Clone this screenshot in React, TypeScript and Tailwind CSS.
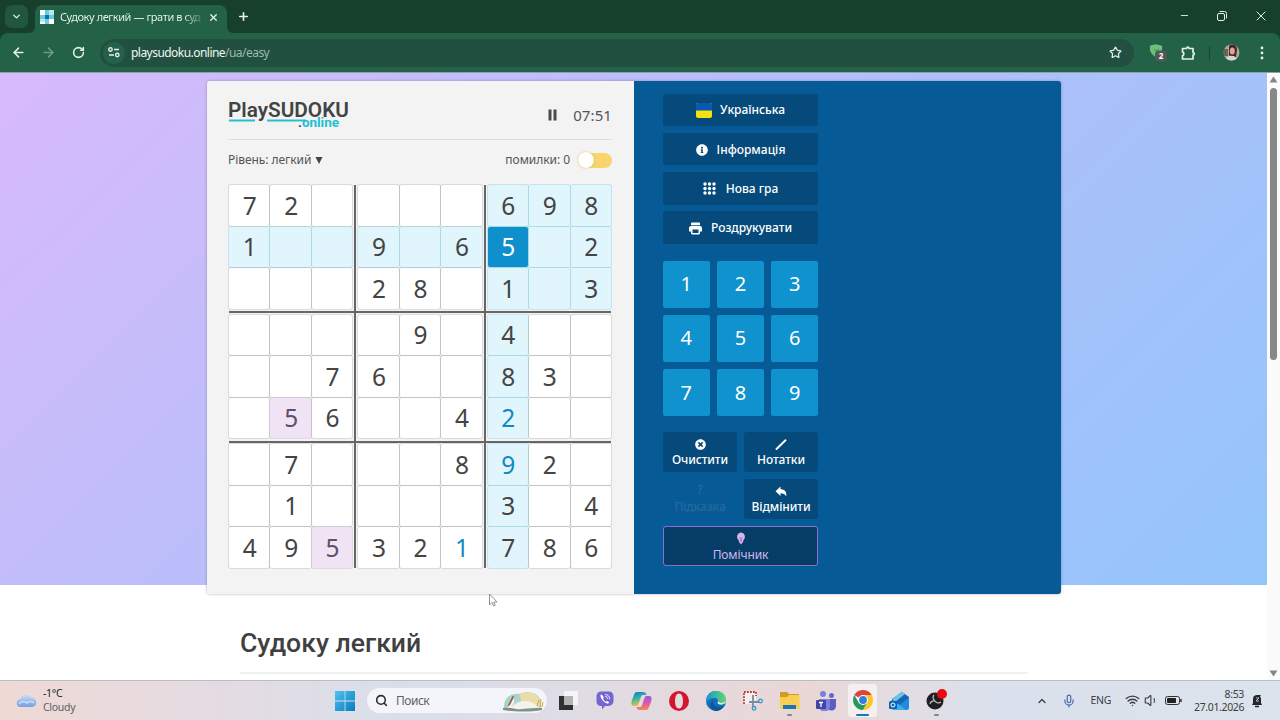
import React from 'react';
import { ArrowLeft, ArrowRight, RotateCw, Star, Plus, X, Minus, ChevronDown, ChevronUp, Wifi, Volume1, Mic, Search } from 'lucide-react';
import { FaInfoCircle, FaTimesCircle } from 'react-icons/fa';

const board = [
  '72....698',
  '1..9.65.2',
  '...28.1.3',
  '....9.4..',
  '..76..83.',
  '.56..42..',
  '.7...892.',
  '.1....3.4',
  '495321786',
];

const entered = ['5-6', '6-6', '8-5'];
const sameDigit = ['5-1', '8-2'];

const cellClass = (row: number, col: number) => {
  const key = `${row}-${col}`;
  if (key === '1-6') return 'bg-[#0f8fcb] text-white shadow-[0_0_0_1px_rgba(120,205,230,0.5)]';
  if (sameDigit.includes(key)) return 'bg-[#efe3f4] text-[#5f5068] shadow-[0_0_0_1px_rgba(190,165,205,0.35)]';
  const related = row === 1 || col === 6 || (row < 3 && col > 5);
  const color = entered.includes(key) ? 'text-[#1488c4]' : 'text-[#444]';
  return related
    ? `bg-[#e0f6fc] ${color} shadow-[0_0_0_1px_rgba(125,205,225,0.38)]`
    : `bg-white ${color} shadow-[0_0_0_1px_rgba(0,0,0,0.1)]`;
};

const Box: React.FC<{ box: number }> = ({ box }) => (
  <div className="grid grid-cols-3 grid-rows-3 gap-px">
    {Array.from({ length: 9 }, (_, i) => {
      const row = Math.floor(box / 3) * 3 + Math.floor(i / 3);
      const col = (box % 3) * 3 + (i % 3);
      const value = board[row][col];
      return (
        <div
          key={i}
          className={`flex items-center justify-center rounded-[2px] pt-px pl-px text-[24.5px] leading-none ${cellClass(row, col)}`}
        >
          {value === '.' ? '' : value}
        </div>
      );
    })}
  </div>
);

const Board: React.FC = () => (
  <div className="relative mt-[12px] ml-px grid h-[383px] w-[382px] grid-cols-3 grid-rows-3 gap-[6px]">
    {Array.from({ length: 9 }, (_, i) => (
      <Box key={i} box={i} />
    ))}
    <div className="absolute inset-y-0 left-[125px] w-[2px] bg-[#666]" />
    <div className="absolute inset-y-0 left-[255px] w-[2px] bg-[#666]" />
    <div className="absolute inset-x-0 top-[126px] h-[2px] bg-[#666]" />
    <div className="absolute inset-x-0 top-[256px] h-[2px] bg-[#666]" />
  </div>
);

const BrowserHeader: React.FC = () => (
  <header className="h-[72px] bg-[#163f2c] font-['Noto_Sans',sans-serif] text-[#e4f1ea]">
    <div className="flex h-[33px] items-end">
      <div className="mb-[5px] ml-[5px] flex h-[23px] w-[23px] items-center justify-center rounded-[7px] bg-[#215640]">
        <ChevronDown size={11} strokeWidth={3} />
      </div>
      <svg className="ml-px h-[6px] w-[6px]" viewBox="0 0 6 6"><path d="M6 0a6 6 0 0 1-6 6h6z" fill="#236247" /></svg>
      <div className="flex h-[28px] w-[192px] items-center rounded-t-[8px] bg-[#236247] pb-1 pl-[5px]">
        <svg width="14" height="14" viewBox="0 0 14 14">
          <path fill="#fff" d="M0 0h14v14H0z" />
          <path fill="#6bcbe5" d="M5 0h4v14H5zM0 5h14v4H0z" />
          <path fill="#b5e8f4" d="M9 0h5v5H9zM0 9h5v3H0z" />
          <path fill="#08779e" d="M5 5h4v4H5z" />
        </svg>
        <span className="ml-1.5 w-[141px] bg-gradient-to-r from-[#f0f8f4] from-88% to-[#f0f8f4]/20 bg-clip-text text-[11px] leading-4 tracking-[-0.42px] whitespace-nowrap text-transparent">
          Судоку легкий — грати в судо
        </span>
        <X className="ml-[7px]" size={11} strokeWidth={3} />
      </div>
      <svg className="h-[6px] w-[6px]" viewBox="0 0 6 6"><path d="M0 0a6 6 0 0 0 6 6H0z" fill="#236247" /></svg>
      <Plus className="mb-[10px] ml-[4px]" size={13} strokeWidth={3} />
      <div className="mb-[12px] ml-auto flex items-center">
        <Minus size={11} strokeWidth={2} />
        <svg className="ml-[27px]" width="10" height="10" viewBox="0 0 10 10" fill="none" stroke="currentColor">
          <rect x=".5" y="2.5" width="7" height="7" rx="1.5" />
          <path d="M2.5 .5h5a2 2 0 0 1 2 2v5" />
        </svg>
        <svg className="mr-[14px] ml-[29px]" width="10" height="10" viewBox="0 0 10 10" stroke="currentColor"><path d="M.7.7l8.6 8.6M9.3.7L.7 9.3" /></svg>
      </div>
    </div>
    <div className="flex h-[39px] items-center rounded-t-[8px] bg-[#236247]">
      <ArrowLeft className="ml-[11px]" size={15} strokeWidth={2.4} />
      <ArrowRight className="ml-[15px] text-[#6f9c88]" size={15} strokeWidth={2.4} />
      <RotateCw className="ml-[16px]" size={13} strokeWidth={2.8} />
      <div className="ml-[15px] flex h-[28px] w-[1034px] items-center rounded-full bg-[#225040] pl-[3px]">
        <div className="flex h-[22px] w-[22px] items-center justify-center rounded-full bg-[#24604a]">
          <svg width="12" height="11" viewBox="0 0 12 11" fill="none" stroke="currentColor" strokeWidth="1.4">
            <circle cx="2.5" cy="2.5" r="1.7" /><path d="M6 2.5h5M1 8h5" /><circle cx="9.3" cy="8" r="1.7" />
          </svg>
        </div>
        <span className="ml-[6px] pt-px text-[12px] leading-4 tracking-[-0.54px] text-[#eef7f2]">
          playsudoku.online<span className="text-[#9dbbac]">/ua/easy</span>
        </span>
        <Star className="mr-[12px] ml-auto" size={13} strokeWidth={2.2} />
      </div>
      <svg className="ml-[15px]" width="18" height="19" viewBox="0 0 18 19">
        <path d="M1 3C4 1 9 1 13 3c1 6-2 9-6 11C3 12 0 8 1 3z" fill="#6cc17a" />
        <path d="M5 6l2 2 3-2" stroke="#3e9458" fill="none" />
        <rect x="6" y="7.5" width="12" height="11" rx="4" fill="#515956" />
        <text x="12" y="16" textAnchor="middle" fill="#fff" fontSize="8" fontWeight="700">2</text>
      </svg>
      <svg className="ml-[14px]" width="15" height="16" viewBox="0 0 15 16" fill="none" stroke="currentColor" strokeWidth="1.7" strokeLinejoin="round">
        <path d="M1.500 3.500H5.500a1.300 1.300 0 0 1 2.600 0h3.900V7.500a1.300 1.300 0 0 1 0 2.600v3.900H1.500v-3.300a2 2 0 0 0 0-3.800z" />
      </svg>
      <div className="ml-[13px] h-[14px] w-px bg-[#174632]" />
      <svg className="ml-[13px]" width="17" height="17" viewBox="0 0 17 17">
        <clipPath id="face"><circle cx="8.5" cy="8.5" r="8" /></clipPath>
        <g clipPath="url(#face)">
          <path fill="#a9ab9b" d="M0 0h17v17H0z" />
          <path fill="#6b6153" d="M0 5h5v7H0z" />
          <path fill="#4d2525" d="M6 2c4-3 8-1 8 4l-1 7-7-1z" />
          <ellipse cx="9.300" cy="7" rx="2.500" ry="3.500" fill="#dba792" />
          <path fill="#d6d8d3" d="M3 17c0-5 4-6 6-5 3 0 5 2 5 5z" />
        </g>
      </svg>
      <svg className="ml-[20px]" width="4" height="14" viewBox="0 0 4 14" fill="currentColor">
        <circle cx="2" cy="2" r="1.400" /><circle cx="2" cy="7" r="1.400" /><circle cx="2" cy="12" r="1.400" />
      </svg>
    </div>
  </header>
);

const menuButton = 'flex h-[32.5px] items-center justify-center rounded-[2px] bg-[#064a7b] pt-px';
const toolButton = 'flex h-[40px] flex-col items-center justify-center gap-[3px] rounded-[3px] pt-[2px] text-[12px] leading-[14px] tracking-[-0.1px]';

const LeftPanel: React.FC = () => (
  <section className="h-full w-[427px] bg-[#f3f3f3] pr-[22px] pl-[21px] text-[#555]">
    <div className="flex h-[59px] items-start justify-between border-b border-[#dedede]">
      <svg className="mt-[17px]" width="124" height="32" viewBox="0 0 124 32">
        <path d="M1 22.500h26M39 22.500h39" stroke="#22bfd5" strokeWidth="2" />
        <text x="0" y="18.500" fill="#444" fontSize="21" fontWeight="600" fontFamily="Roboto, sans-serif" textLength="121" lengthAdjust="spacingAndGlyphs">PlaySUDOKU</text>
        <text x="70" y="29" fill="#22bfd5" fontSize="12.500" fontWeight="700" fontFamily="Roboto, sans-serif" textLength="41" lengthAdjust="spacingAndGlyphs"><tspan fill="#444">.</tspan>online</text>
      </svg>
      <div className="mt-[24px] flex items-center">
        <svg width="9" height="12" viewBox="0 0 9 12" fill="#4a4a4a"><path d="M.5 .5h3v11h-3zM5.500 .5h3v11h-3z" /></svg>
        <span className="ml-[16px] text-[15px] leading-5 tracking-[0.1px]">07:51</span>
      </div>
    </div>
    <div className="flex h-[33px] items-center pt-[7px] text-[12px]">
      <span className="tracking-[-0.05px]">Рівень: легкий</span>
      <svg className="ml-1" width="8" height="9" viewBox="0 0 8 9"><path d="M.5 1h7L4 8z" fill="#444" /></svg>
      <span className="ml-auto tracking-[-0.05px]">помилки: 0</span>
      <div className="ml-[8px] flex h-[15px] w-[34px] items-center rounded-full bg-[#f7d56b]">
        <div className="h-[16px] w-[16px] shrink-0 rounded-full bg-white shadow-[0_0_2px_rgba(200,160,40,0.7)]" />
      </div>
    </div>
    <Board />
  </section>
);

const RightPanel: React.FC = () => (
  <section className="h-full w-[427px] bg-[#065b96] pt-[12.5px] pl-[29px] text-white">
    <div className="w-[155px]">
      <div className="flex flex-col gap-[6.8px] text-[12px] font-medium">
        <button className={menuButton}>
          <svg width="16" height="16" viewBox="0 0 16 16">
            <rect y="1" width="16" height="15" rx="2" fill="#f8df12" />
            <path d="M0 3a2 2 0 0 1 2-2h12a2 2 0 0 1 2 2v5.500H0z" fill="#0758b5" />
          </svg>
          <span className="ml-[8px]">Українська</span>
        </button>
        <button className={menuButton}>
          <FaInfoCircle size={12} />
          <span className="ml-[9px]">Інформація</span>
        </button>
        <button className={menuButton}>
          <svg width="13" height="13" viewBox="0 0 13 13" fill="currentColor">
            {[2, 6.5, 11].map((y) => [2, 6.5, 11].map((x) => <circle key={`${x}-${y}`} cx={x} cy={y} r="1.700" />))}
          </svg>
          <span className="ml-[10px]">Нова гра</span>
        </button>
        <button className={menuButton}>
          <svg width="13" height="13" viewBox="0 0 13 13" fill="currentColor">
            <path d="M3 .5h7a1 1 0 0 1 1 1v1.700H2V1.500a1 1 0 0 1 1-1z" />
            <path fillRule="evenodd" d="M2 4h9a2 2 0 0 1 2 2v3.500h-2V11a1.500 1.500 0 0 1-1.500 1.500h-6A1.500 1.500 0 0 1 2 11V9.500H0V6a2 2 0 0 1 2-2zm1.500 3.500V11h6V7.500z" />
          </svg>
          <span className="ml-[9px]">Роздрукувати</span>
        </button>
      </div>
      <div className="mt-[17px] grid grid-cols-3 gap-[7.5px] text-[20px]">
        {[1, 2, 3, 4, 5, 6, 7, 8, 9].map((n) => (
          <button key={n} className="flex h-[46.700px] items-center justify-center rounded-[2px] bg-[#0f92cd] leading-none">
            {n}
          </button>
        ))}
      </div>
      <div className="mt-[16.500px] grid grid-cols-2 gap-x-[7px] gap-y-[6.700px] font-medium">
        <button className={`${toolButton} bg-[#064a7b]`}>
          <FaTimesCircle size={11} />
          Очистити
        </button>
        <button className={`${toolButton} bg-[#064a7b]`}>
          <svg width="12" height="11" viewBox="0 0 12 11"><path d="M1.500 10L10.500 1.200" stroke="#fff" strokeWidth="1.900" strokeLinecap="round" /></svg>
          Нотатки
        </button>
        <button className={`${toolButton} text-[#24699c]`}>
          <span className="-mt-[3px] text-[12px] leading-[14px]">?</span>
          Підказка
        </button>
        <button className={`${toolButton} bg-[#064a7b]`}>
          <svg width="12" height="11" viewBox="0 0 12 11"><path d="M5.500 .5v2.700c4 0 6.500 2.200 5.700 7.300C10 8 8.500 7.200 5.500 7.200V10L.5 5.200z" fill="#fff" /></svg>
          Відмінити
        </button>
        <button className={`${toolButton} col-span-2 gap-[2px] border-[1.500px] border-[#8e70cc] bg-[#063d66] font-normal text-[#d5b5ee]`}>
          <svg width="10" height="13" viewBox="0 0 10 13">
            <path d="M5 .5a4.200 4.200 0 0 1 2.600 7.300L7 10l-2 2.500L3 10l-.6-2.200A4.200 4.200 0 0 1 5 .5z" fill="currentColor" />
            <path d="M4 5.500l1 1 1-1M5 6.500V10" stroke="#604d84" strokeWidth=".8" fill="none" />
          </svg>
          Помічник
        </button>
      </div>
    </div>
  </section>
);

const appSlot = 'flex h-[34px] w-[36.8px] shrink-0 items-center justify-center';

const Taskbar: React.FC = () => (
  <footer className="flex h-[40px] items-center border-t border-[#b9bec6] bg-linear-[90deg,#efd9d5_0%,#e4dbe2_17%,#d9dfea_31%,#dfdce4_45%,#ead7d6_63%,#dbe1ec_77%,#dbe3ec_100%] font-['Noto_Sans',sans-serif] text-[#3d3d42]">
    <svg className="ml-[16px]" width="21" height="15" viewBox="0 0 21 15">
      <defs><linearGradient id="cloud" y2="1" x2="0"><stop stopColor="#c7dcf6" /><stop offset="1" stopColor="#789ee0" /></linearGradient></defs>
      <path d="M5 14a4 4 0 0 1-.5-8A6 6 0 0 1 15.500 4.800 4.600 4.600 0 0 1 16 14z" fill="url(#cloud)" />
      <path d="M3 11c2-3 6-3 8-1 2-2 5-2 7 0" stroke="#d8e6fa" strokeWidth="1.200" fill="none" />
    </svg>
    <div className="ml-[6px] w-[60px] text-[10.500px] leading-[13.500px] tracking-[-0.300px]">
      <div className="text-[#222]">-1°C</div>
      <div className="text-[#606066]">Cloudy</div>
    </div>
    <svg className="ml-[232px]" width="20" height="20" viewBox="0 0 20 20">
      <defs><linearGradient id="win" x2="1" y2="1"><stop stopColor="#4dc5ee" /><stop offset="1" stopColor="#087bc0" /></linearGradient></defs>
      <path d="M0 0h9.600v9.600H0zM10.400 0H20v9.600h-9.600zM0 10.400h9.600V20H0zM10.400 10.400H20V20h-9.600z" fill="url(#win)" />
    </svg>
    <div className="ml-[12px] flex h-[25px] w-[180px] items-center rounded-full bg-[#f3f5fa] pl-[8px]">
      <Search size={13} strokeWidth={2.8} className="text-[#2b2b2f]" />
      <span className="ml-[8px] text-[12px] tracking-[-0.500px] text-[#606066]">Поиск</span>
      <svg className="mr-[3px] ml-auto" width="42" height="22" viewBox="0 0 42 22">
        <path d="M2 17C2 8 8 3 18 4c6-4 18-1 20 5l1 10H2z" fill="#a9d4c9" />
        <path d="M18 4c7-4 18 0 20 6v8H20z" fill="#eedca8" />
        <path d="M4 19c3-6 5-9 6-12l2-1 0 4c1 3-1 4-3 7 5-4 8-6 14-6 6 0 12 3 13 7-8 3-24 3-32 1z" fill="#f2f2ee" />
        <path d="M5 17L10.500 6l1.800.5L8 15z" fill="#925f52" />
        <path d="M1 18c8-1 12 2 19 1s13-1 20-1v2c-10 2-30 2-39 0z" fill="#80918a" />
        <path d="M35 16l2-6M38 17l1-8M40 17l1-5" stroke="#c9a84b" />
      </svg>
    </div>
    <div className="ml-[3px] flex">
      <div className={appSlot}>
        <svg width="20" height="20" viewBox="0 0 20 20"><path d="M6 0h14v14H6z" fill="#f5f5f7" /><path d="M1 5h14v14H1z" fill="#303033" /><path d="M6 5h9v9H6z" fill="#b3b3b6" /></svg>
      </div>
      <div className={appSlot}>
        <svg width="18" height="19" viewBox="0 0 18 19">
          <path d="M5 .5h8a4.500 4.500 0 0 1 4.500 4.500v5a5 5 0 0 1-5 5H9l-3 3.500V15C2 15 .5 13 .5 10V5A4.500 4.500 0 0 1 5 .5z" fill="#7565d0" />
          <path d="M5.700 3.500c-1 0-1.700 1-1.200 2 1 3 3 5.500 6.500 7 1 .4 2-.5 2-1.300L11.300 10l-1.300.8C8.500 10 7.500 9 7 7.500L7.700 6z" fill="#fff" />
          <path d="M9.500 3.500c2.600.3 4 1.700 4.200 4.200M9.700 5.500c1.200.1 2 .9 2.100 2" fill="none" stroke="#fff" strokeWidth=".9" strokeLinecap="round" />
        </svg>
      </div>
      <div className={appSlot}>
        <svg width="21" height="20" viewBox="0 0 21 20">
          <defs>
            <linearGradient id="copA" y2="1" x2=".3"><stop stopColor="#146fca" /><stop offset=".5" stopColor="#31b7a5" /><stop offset="1" stopColor="#f3bd3b" /></linearGradient>
            <linearGradient id="copB" y2="1" x2="0"><stop stopColor="#925be0" /><stop offset=".5" stopColor="#dc5aaa" /><stop offset="1" stopColor="#f48b48" /></linearGradient>
          </defs>
          <path d="M6 1h6c2 0 3 1 3.500 3H12c-2 0-2 2-3 5l-1.500 4C7 15 6 15 4 15H3c-3 0-3-3-2-6l2-5c.6-2 1.500-3 3-3z" fill="url(#copA)" />
          <path d="M15 19H9c-2 0-3-1-3.500-3H9c2 0 2-2 3-5l1.500-4C14 5 15 5 17 5h1c3 0 3 3 2 6l-2 5c-.6 2-1.500 3-3 3z" fill="url(#copB)" />
        </svg>
      </div>
      <div className={appSlot}>
        <svg width="20" height="20" viewBox="0 0 20 20"><path fillRule="evenodd" d="M10 0a10 10 0 1 1 0 20 10 10 0 0 1 0-20zm0 2.500C7.300 2.500 6 6 6 10s1.300 7.500 4 7.500 4-3.500 4-7.500-1.300-7.500-4-7.500z" fill="#d4152f" /></svg>
      </div>
      <div className={appSlot}>
        <svg width="20" height="20" viewBox="0 0 20 20">
          <defs><linearGradient id="edge" x2="1"><stop stopColor="#1594d4" /><stop offset="1" stopColor="#61d86b" /></linearGradient></defs>
          <circle cx="10" cy="10" r="10" fill="#126fbe" />
          <path d="M0 9C1 3 5 0 10 0c6 0 10 4 10 8.500 0 3-2 5-5 5-2 0-4-1-3-2.500 1-2-1-4-4-4-4 0-7 3-8 5z" fill="url(#edge)" />
          <path d="M8 8c-3 5 1 10 10 7-2 3-5 5-8 5-6-1-8-7-2-12z" fill="#145394" />
          <path d="M20 10c0 3-4 4.500-7.500 3-1.500-.8-.5-1.500-.5-3 2 3 6 2 8 0z" fill="#e8e3eb" />
        </svg>
      </div>
      <div className={appSlot}>
        <svg width="21" height="21" viewBox="0 0 21 21" fill="none">
          <path d="M2 2h12v12H2z" fill="#f4eeee" />
          <path d="M2 14V2h12v4" stroke="#bb3e35" strokeWidth="1.800" strokeDasharray="1.800 1.200" />
          <path d="M11 5v11M7 12h10" stroke="#788c9a" strokeWidth="1.800" />
          <circle cx="18.500" cy="11" r="1.800" stroke="#319bcb" strokeWidth="1.300" /><circle cx="12" cy="18.300" r="1.800" stroke="#319bcb" strokeWidth="1.300" />
        </svg>
      </div>
      <div className={`${appSlot} flex-col pt-[6px]`}>
        <svg width="21" height="19" viewBox="0 0 21 19"><path d="M1 1h7l2 2h10v5H1z" fill="#d39a20" /><path d="M1 6h7l2-2h10.500v14H1z" fill="#f8cf50" /><path d="M4 14h13v4H4z" fill="#1877b8" /></svg>
        <div className="mt-[4px] h-[2px] w-[5px] rounded-full bg-[#85858a]" />
      </div>
      <div className={appSlot}>
        <svg width="20" height="20" viewBox="0 0 20 20">
          <circle cx="7" cy="3" r="3" fill="#7b7fe2" /><circle cx="15.500" cy="4.500" r="2.500" fill="#6668ca" />
          <path d="M11 8h9v7a4.500 4.500 0 0 1-9 0z" fill="#5b5dc2" /><path d="M3 8h11v7a5 5 0 0 1-11 0z" fill="#7d80df" />
          <rect y="9" width="10" height="9" rx="1" fill="#4245a4" /><path d="M3 11.500h4M5 11.500V16" stroke="#fff" strokeWidth="1.300" />
        </svg>
      </div>
      <div className={`${appSlot} flex-col`}>
        <div className="flex h-[33px] w-[29px] flex-col items-center rounded-[3px] bg-[#f5eff2] pt-[6px]">
          <svg width="20" height="20" viewBox="0 0 20 20">
            <path d="M10 10L1.340 5A10 10 0 0 1 18.660 5z" fill="#db4437" />
            <path d="M1.340 5A10 10 0 0 0 10 20l4.300-7.500H5.670z" fill="#23995a" />
            <path d="M18.660 5A10 10 0 0 1 10 20l4.330-7.500L10 5z" fill="#fbc724" />
            <circle cx="10" cy="10" r="5" fill="#fff" /><circle cx="10" cy="10" r="3.900" fill="#367dde" />
          </svg>
          <div className="mt-[4px] h-[2px] w-[13px] rounded-full bg-[#1676b7]" />
        </div>
      </div>
      <div className={appSlot}>
        <svg width="21" height="20" viewBox="0 0 21 20">
          <path d="M3 8l10-7 7 5v8H3z" fill="#1766b6" /><path d="M3 8l10-7 3 2L6 11z" fill="#69c4ef" />
          <path d="M2 9l9 5 9-7v9a3 3 0 0 1-3 3H5a3 3 0 0 1-3-3z" fill="#35b0ef" />
          <path d="M11 14l9-7v9a3 3 0 0 1-3 3z" fill="#2289dd" />
          <rect y="10" width="8" height="8" rx="1.500" fill="#0c63b0" /><circle cx="4" cy="14" r="2" fill="none" stroke="#fff" />
        </svg>
      </div>
      <div className={`${appSlot} flex-col pt-[4px]`}>
        <svg width="21" height="21" viewBox="0 0 21 21">
          <circle cx="9" cy="12" r="8.500" fill="#202024" />
          <path d="M8 6a4 4 0 0 0 1 6M9 12a4 4 0 0 0 6 1M9 12a4 4 0 0 0-5 3" fill="none" stroke="#b8b8bc" strokeWidth="1.300" />
          <circle cx="16" cy="5" r="5" fill="#ec0916" />
        </svg>
        <div className="mt-[4px] h-[2px] w-[5px] rounded-full bg-[#85858a]" />
      </div>
    </div>
    <div className="mr-[17px] ml-auto flex items-center text-[10.500px] tracking-[-0.350px]">
      <ChevronUp size={12} strokeWidth={2.5} />
      <Mic className="ml-[14px] text-[#4169aa]" size={14} strokeWidth={2} />
      <span className="ml-[15px]">ENG</span>
      <Wifi className="ml-[14px]" size={15} strokeWidth={2.2} />
      <Volume1 className="ml-[4px]" size={15} strokeWidth={1.8} />
      <svg className="ml-[6px]" width="17" height="9" viewBox="0 0 17 9"><rect x=".5" y=".5" width="14" height="8" rx="2" fill="none" stroke="#303036" /><rect x="2" y="2" width="9" height="5" rx=".7" fill="#222" /><path d="M16 3v3" stroke="#303036" strokeWidth="1.500" /></svg>
      <div className="ml-[12px] w-[50px] text-right leading-[13px] whitespace-nowrap">
        <div>8:53</div>
        <div>27.01.2026</div>
      </div>
      <svg className="ml-[7px]" width="12" height="14" viewBox="0 0 12 14"><path d="M2 9V5c0-3 2-4 4-4h4v8l1 2H1z" fill="#25262b" /><path d="M4 12.500h4" stroke="#25262b" strokeWidth="1.500" /><path d="M5 4h3L5 7h3M9 1h2L9 3h2" stroke="#d9e0e8" strokeWidth=".8" fill="none" /></svg>
    </div>
  </footer>
);

const App: React.FC = () => {
  return (
    <div className="relative flex h-[720px] w-[1280px] flex-col overflow-hidden bg-white">
      <BrowserHeader />
      <div className="flex h-[608px] border-t border-[#8e9fb0]">
        <main className="flex-1 bg-white font-['Noto_Sans',sans-serif]">
          <div className="h-[512px] bg-linear-[135deg,#d8bafb_0%,#b2bffa_50%,#93c5fb_100%] pt-[8px] pl-[207px]">
            <div className="flex h-[512.500px] w-[854px] overflow-hidden rounded-[3px] shadow-[0_0_3px_rgba(60,60,90,0.4)]">
              <LeftPanel />
              <RightPanel />
            </div>
          </div>
          <div className="mr-[239px] ml-[240px] border-b-2 border-[#f0f0f0] pt-[38px] pb-[9px]">
            <h1 className="font-['Roboto',sans-serif] text-[26.600px] leading-[40px] font-medium text-[#404040]">Судоку легкий</h1>
          </div>
        </main>
        <div className="flex w-[13px] flex-col items-center bg-[#fbfbfb] pt-[3px] pb-[3px]">
          <svg width="9" height="7" viewBox="0 0 9 7"><path d="M4.500 .5L8.500 6.500H.5z" fill="#858585" /></svg>
          <div className="mt-[5px] h-[272px] w-[7px] rounded-full bg-[#878787]" />
          <svg className="mt-auto" width="9" height="7" viewBox="0 0 9 7"><path d="M4.500 6.500L8.500 .5H.5z" fill="#858585" /></svg>
        </div>
      </div>
      <Taskbar />
      <svg className="absolute top-[593px] left-[488px]" width="10" height="15" viewBox="0 0 10 15"><path d="M1.500 1v11l2.500-2.500L5.500 13l1.700-.8L5.700 9H9z" fill="#fff" stroke="#777" strokeWidth=".8" /></svg>
    </div>
  );
};

export default App;
